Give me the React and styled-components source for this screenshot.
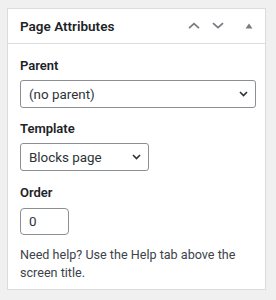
import React from 'react';
import styled, {createGlobalStyle} from 'styled-components';

const GlobalStyle = createGlobalStyle`
  body {
    margin: 0;
    background: #f0f0f1;
    font-family: Roboto, "Liberation Sans", Arial, sans-serif;
    color: #1d2327;
  }
`;

const StyledPage = styled.div`
  padding: 8px 10px 0 7px;
`;

const StyledBox = styled.div`
  background: #fff;
  border: 1px solid #dcdcde;
  height: 282px;
  box-sizing: border-box;
`;

const StyledHeader = styled.div`
  display: flex;
  align-items: center;
  height: 34px;
  padding: 0 12px 0 12px;
  border-bottom: 1px solid #dcdcde;
`;

const StyledTitle = styled.h2`
  flex: 1;
  margin: 0;
  font-size: 13.5px;
  font-weight: 600;
`;

const StyledActions = styled.div`
  display: flex;
  align-items: center;
  gap: 10px;
`;

const StyledIconButton = styled.button`
  display: flex;
  align-items: center;
  justify-content: center;
  width: ${p => p.$w || 14}px;
  height: 20px;
  padding: 0;
  border: 0;
  background: transparent;
  color: #787c82;
  margin-left: ${p => p.$ml || 0}px;
`;

const StyledBody = styled.div`
  padding: 13px 12px 0 12px;
`;

const StyledLabel = styled.div`
  font-size: 13px;
  font-weight: 600;
  line-height: 18px;
  margin-top: ${p => p.$mt || 0}px;
  margin-bottom: ${p => p.$mb || 5}px;
`;

const StyledSelect = styled.div`
  display: flex;
  align-items: center;
  justify-content: space-between;
  box-sizing: border-box;
  width: ${p => p.$width};
  height: 28px;
  padding: 0 7px 0 8px;
  border: 1px solid #8c8f94;
  border-radius: 3px;
  font-size: 13.4px;
  color: #2c3338;
`;

const StyledInput = styled.div`
  display: flex;
  align-items: center;
  box-sizing: border-box;
  width: 49px;
  height: 27px;
  padding: 0 8px;
  border: 1px solid #8c8f94;
  border-radius: 4px;
  font-size: 13.4px;
  color: #2c3338;
`;

const StyledHelp = styled.p`
  margin: 11px 0 0;
  font-size: 12.6px;
  line-height: 18px;
  color: #3c434a;
`;

const Chevron = ({up, size = 12}) => (
    <svg width={size} height={size * 0.6} viewBox="0 0 12 7" fill="none">
        <path d={up ? "M1 6L6 1.5L11 6" : "M1 1L6 5.5L11 1"} stroke="currentColor" strokeWidth="1.8"/>
    </svg>
);

const SelectArrow = () => (
    <svg width="9" height="6" viewBox="0 0 9 6" fill="none">
        <path d="M1 1L4.5 4.5L8 1" stroke="#2c3338" strokeWidth="1.6"/>
    </svg>
);

const Triangle = () => (
    <svg width="8" height="6" viewBox="0 0 8 6">
        <path d="M0.5 5.5L4 0.5L7.5 5.5Z" fill="currentColor"/>
    </svg>
);

const App = () => (
    <>
        <GlobalStyle/>
        <StyledPage>
            <StyledBox>
                <StyledHeader>
                    <StyledTitle>Page Attributes</StyledTitle>
                    <StyledActions>
                        <StyledIconButton $ml={1}><Chevron up/></StyledIconButton>
                        <StyledIconButton><Chevron/></StyledIconButton>
                        <StyledIconButton $w={8} $ml={10}><Triangle/></StyledIconButton>
                    </StyledActions>
                </StyledHeader>
                <StyledBody>
                    <StyledLabel>Parent</StyledLabel>
                    <StyledSelect $width="236px">
                        <span>(no parent)</span>
                        <SelectArrow/>
                    </StyledSelect>
                    <StyledLabel $mt={12}>Template</StyledLabel>
                    <StyledSelect $width="129px">
                        <span>Blocks page</span>
                        <SelectArrow/>
                    </StyledSelect>
                    <StyledLabel $mt={13} $mb={6}>Order</StyledLabel>
                    <StyledInput>0</StyledInput>
                    <StyledHelp>Need help? Use the Help tab above the screen title.</StyledHelp>
                </StyledBody>
            </StyledBox>
        </StyledPage>
    </>
);

export default App;
